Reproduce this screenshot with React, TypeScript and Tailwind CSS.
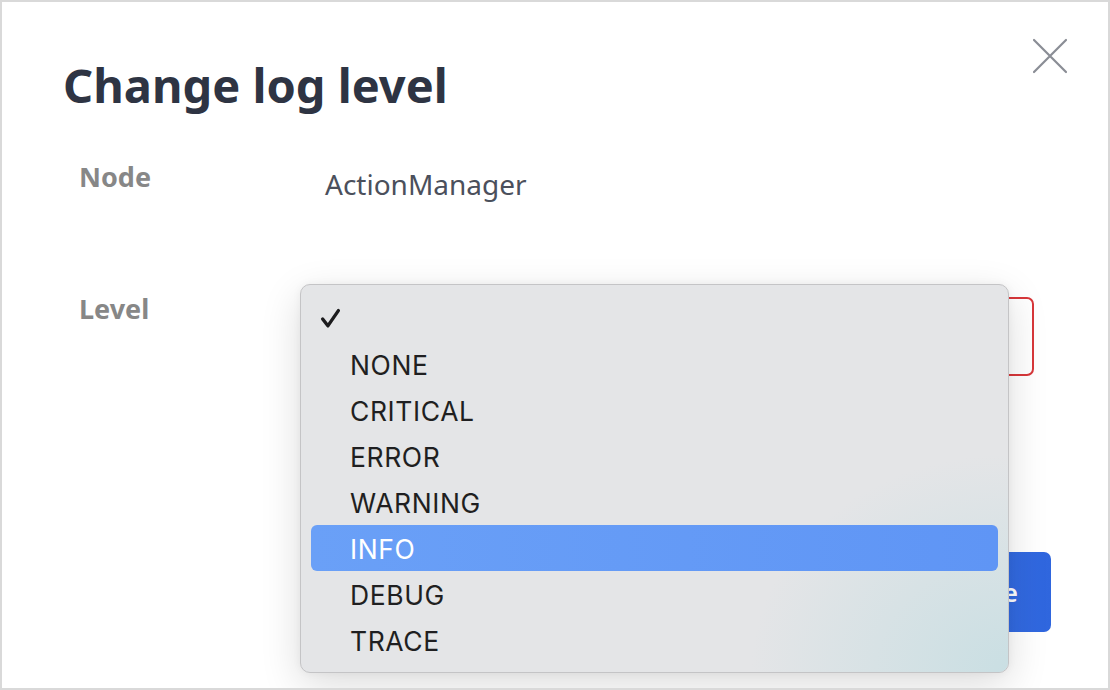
const levels = ['', 'NONE', 'CRITICAL', 'ERROR', 'WARNING', 'INFO', 'DEBUG', 'TRACE'];

function Check() {
    return (
        <svg width="21" height="21" viewBox="0 0 20 20" fill="none">
            <path d="M2.5 10.5 L7.5 17 L17.5 2.5" stroke="#1c1c1e" strokeWidth="3.2" strokeLinecap="round" strokeLinejoin="round" />
        </svg>
    );
}

function Close() {
    return (
        <svg width="36" height="36" viewBox="0 0 36 36" fill="none">
            <path d="M2 2 L34 34 M34 2 L2 34" stroke="#8a8d95" strokeWidth="2.2" strokeLinecap="round" />
        </svg>
    );
}

export default function App() {
    const selected = '';
    const hover = 'INFO';

    return (
        <div className="relative w-[1110px] h-[690px] overflow-hidden bg-white border-2 border-[#d9d9d9] font-['Noto_Sans',sans-serif]">
            <div className="flex items-start justify-between pl-[61px] pr-[40px] pt-[48px]">
                <h1 className="text-[47px] leading-[70px] font-bold text-[#2e3443]">Change log level</h1>
                <button className="mt-[-12px]">
                    <Close />
                </button>
            </div>

            <div className="pl-[77px] pr-[74px] mt-[37px]">
                <div className="grid grid-cols-[246px_1fr] items-start">
                    <div className="text-[27px] leading-[40px] font-bold text-[#878787]">Node</div>
                    <div className="pt-[7px] text-[28px] leading-[40px] text-[#4b505c]">ActionManager</div>
                </div>
                <div className="grid grid-cols-[246px_1fr] items-start mt-[87px]">
                    <div className="text-[27px] leading-[40px] font-bold text-[#878787] -mt-[2px]">Level</div>
                    <div className="h-[79px] mt-[6px] rounded-[7px] border-2 border-[#d8373a]" />
                </div>
                <div className="flex justify-end mt-[176px] -mr-[17px]">
                    <button className="h-[80px] px-[33px] rounded-[7px] bg-gradient-to-r from-[#3a74ea] to-[#2f66de] text-white text-[26px] font-semibold">
                        Save
                    </button>
                </div>
            </div>

            <div className="absolute left-[298px] top-[282px] w-[709px] h-[389px] rounded-[10px] border border-[#c4c4c6] bg-[#e4e5e7] shadow-[0_12px_40px_rgba(0,0,0,0.14),0_0_8px_rgba(0,0,0,0.05)] overflow-hidden font-['Inter',sans-serif]">
                <div className="absolute right-0 bottom-0 w-[260px] h-[220px] bg-[radial-gradient(ellipse_at_bottom_right,rgba(190,220,225,0.7),rgba(228,229,231,0)_70%)]" />
                <div className="relative flex flex-col px-[10px] pt-[10px]">
                    {levels.map(l => (
                        <div
                            key={l || 'empty'}
                            className={`flex items-center h-[46px] rounded-[6px] ${l === hover ? 'bg-gradient-to-r from-[#6aa0f7] to-[#5f95f5] text-white' : 'text-[#1f1f21]'}`}>
                            <div className="w-[39px] pl-[9px] flex items-center">
                                {l === selected && <Check />}
                            </div>
                            <span className="pt-[2px] text-[26.5px] leading-none tracking-[0.6px]">{l}</span>
                        </div>
                    ))}
                </div>
            </div>
        </div>
    );
}
